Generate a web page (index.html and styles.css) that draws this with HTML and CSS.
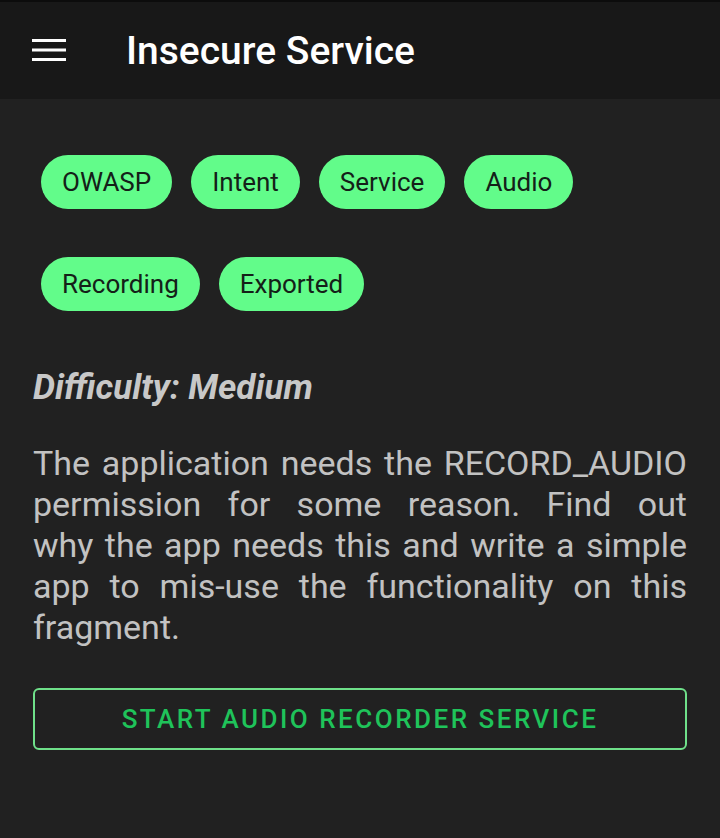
FILE: index.html
```html
<!DOCTYPE html>
<html>
<head>
<meta charset="utf-8">
<link rel="stylesheet" href="styles.css">
</head>
<body>
<header class="toolbar">
  <svg class="menu" width="34" height="24" viewBox="0 0 34 24"><rect x="0" y="1" width="34" height="3" fill="#fff"/><rect x="0" y="10.5" width="34" height="3" fill="#fff"/><rect x="0" y="20" width="34" height="3" fill="#fff"/></svg>
  <h1 class="title">Insecure Service</h1>
</header>
<main class="content">
  <div class="chips">
    <span class="chip">OWASP</span>
    <span class="chip">Intent</span>
    <span class="chip">Service</span>
    <span class="chip">Audio</span>
    <span class="chip">Recording</span>
    <span class="chip">Exported</span>
  </div>
  <p class="difficulty">Difficulty: Medium</p>
  <p class="desc"><span class="ln">The application needs the RECORD_AUDIO</span> <span class="ln">permission for some reason. Find out</span> <span class="ln">why the app needs this and write a simple</span> <span class="ln">app to mis-use the functionality on this</span> <span class="ln last">fragment.</span></p>
  <button class="btn">START AUDIO RECORDER SERVICE</button>
</main>
</body>
</html>
```
FILE: styles.css
```css
html, body {
  margin: 0;
  padding: 0;
  background: #212121;
  font-family: Roboto, "Noto Sans", sans-serif;
  width: 720px;
  height: 838px;
  overflow: hidden;
}
.toolbar {
  height: 99px;
  background: #181818;
  border-top: 2px solid #0c0c0c;
  box-sizing: border-box;
  display: flex;
  align-items: center;
}
.menu {
  margin-left: 32px;
  margin-top: -2px;
}
.title {
  margin: 0 0 0 60px;
  font-size: 39px;
  font-weight: 500;
  color: #ffffff;
  line-height: 46px;
}
.content {
  padding: 56px 33px 0 33px;
}
.chips {
  display: flex;
  flex-wrap: wrap;
  column-gap: 19px;
  row-gap: 48px;
  padding-left: 8px;
}
.chip {
  height: 54px;
  border-radius: 27px;
  background: #62fc8a;
  color: #142018;
  font-size: 26px;
  padding: 0 21px;
  display: flex;
  align-items: center;
}
.difficulty {
  margin: 57px 0 0 0;
  font-size: 35px;
  font-weight: 700;
  font-style: italic;
  color: #c8c8c8;
  line-height: 40px;
}
.desc {
  margin: 35px 0 0 0;
  font-size: 34px;
  line-height: 41px;
  color: #c2c2c2;
}
.ln {
  display: block;
  white-space: nowrap;
  text-align: justify;
  text-align-last: justify;
}
.ln.last {
  text-align-last: left;
}
.btn {
  margin-top: 40px;
  width: 654px;
  height: 62px;
  padding: 0;
  border: 2px solid #6fe08a;
  border-radius: 6px;
  background: transparent;
  color: #1fc35a;
  font-family: Roboto, sans-serif;
  font-size: 26px;
  font-weight: 500;
  letter-spacing: 2.5px;
  display: block;
}
```
